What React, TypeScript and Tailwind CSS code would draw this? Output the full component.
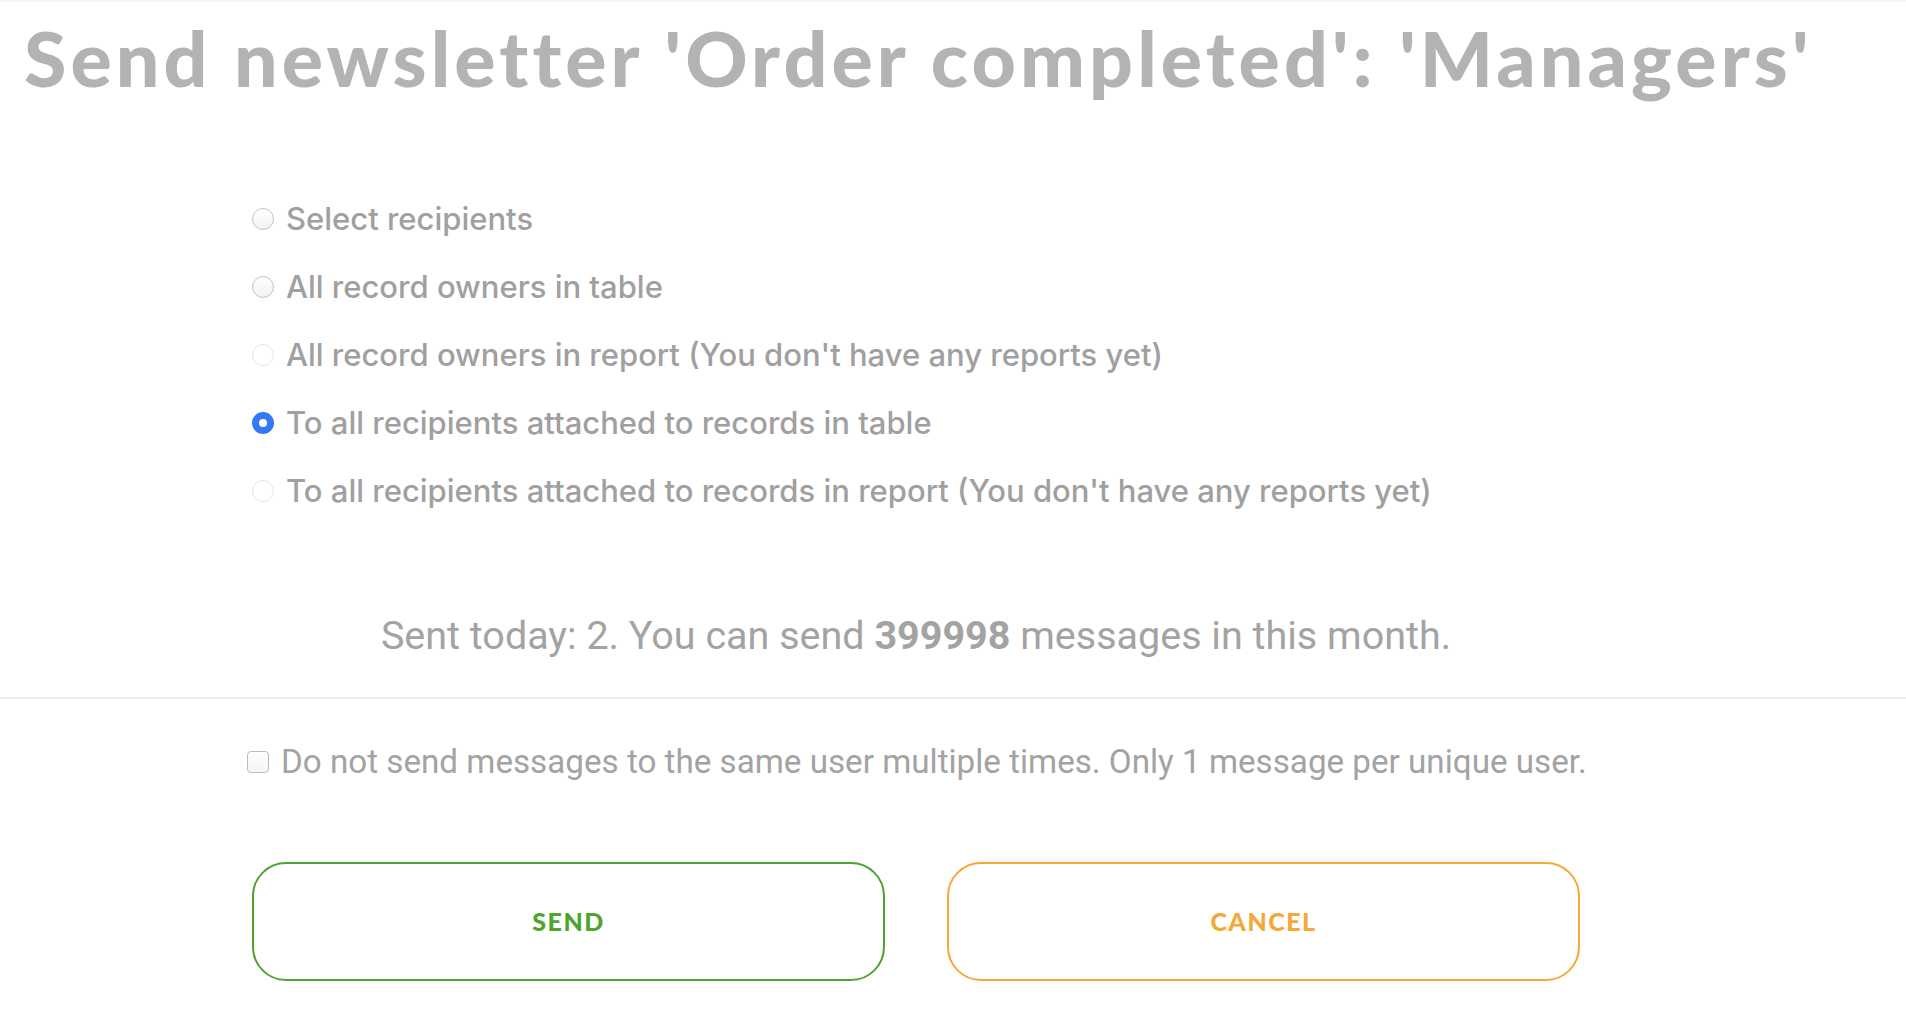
import { useState } from "react";

const options = [
  { label: "Select recipients", disabled: false },
  { label: "All record owners in table", disabled: false },
  { label: "All record owners in report (You don't have any reports yet)", disabled: true },
  { label: "To all recipients attached to records in table", disabled: false },
  { label: "To all recipients attached to records in report (You don't have any reports yet)", disabled: true },
];

const Radio = ({ checked, disabled }: { checked: boolean; disabled: boolean }) => {
  if (checked) {
    return (
      <span className="flex h-[22px] w-[22px] shrink-0 items-center justify-center rounded-full bg-[#3478f6]">
        <span className="h-[8px] w-[8px] rounded-full bg-white" />
      </span>
    );
  }
  return (
    <span
      className={
        disabled
          ? "h-[22px] w-[22px] shrink-0 rounded-full border border-[#e4e4e4] bg-white"
          : "h-[22px] w-[22px] shrink-0 rounded-full border border-[#c4c4c4] bg-gradient-to-b from-white to-[#f2f2f2]"
      }
    />
  );
};

const App = () => {
  const [selected, setSelected] = useState(3);
  const [unique, setUnique] = useState(false);

  return (
    <div className="min-h-screen border-t-2 border-[#f4f4f4] bg-white">
      <h1 className="whitespace-nowrap pl-[24px] pt-[17px] font-['Lato',sans-serif] text-[77px] font-black leading-none tracking-[4.1px] text-[#b3b3b3]">
        Send newsletter 'Order completed': 'Managers'
      </h1>

      <div className="pl-[252px] pr-[326px]">
        <div className="mt-[89px] flex flex-col">
          {options.map((opt, i) => (
            <label
              key={opt.label}
              className="flex h-[68px] cursor-pointer items-center gap-[12px] font-['Inter',sans-serif] text-[31px] font-medium text-[#a0a0a0]"
              onClick={() => !opt.disabled && setSelected(i)}
            >
              <Radio checked={selected === i} disabled={opt.disabled} />
              <span className="whitespace-nowrap">{opt.label}</span>
            </label>
          ))}
        </div>

        <p className="mt-[87px] text-center font-['Roboto',sans-serif] text-[39.5px] leading-[48px] text-[#a3a3a3]">
          Sent today: 2. You can send <span className="font-bold">399998</span> messages in this month.
        </p>
      </div>

      <div className="mt-[37px] border-b-2 border-[#ebebef]" />

      <div className="pl-[252px] pr-[326px]">
        <label
          className="-ml-[5px] mt-[39px] flex h-[48px] cursor-pointer items-center gap-[12px] font-['Roboto',sans-serif] text-[33.2px] text-[#a3a3a3]"
          onClick={() => setUnique(!unique)}
        >
          <span className="h-[22px] w-[22px] shrink-0 rounded-[4px] border border-[#bcbcbc] bg-gradient-to-b from-white to-[#f4f4f4]" />
          <span className="whitespace-nowrap">
            Do not send messages to the same user multiple times. Only 1 message per unique user.
          </span>
        </label>

        <div className="mt-[76px] grid grid-cols-2 gap-[62px]">
          <button className="flex h-[119px] items-center justify-center rounded-[34px] border-2 border-[#4ea42f] font-['Lato',sans-serif] text-[25px] font-black uppercase tracking-[1.5px] text-[#4ea42f]">
            Send
          </button>
          <button className="flex h-[119px] items-center justify-center rounded-[34px] border-2 border-[#f4a838] font-['Lato',sans-serif] text-[25px] font-black uppercase tracking-[1.5px] text-[#f4a838]">
            Cancel
          </button>
        </div>
      </div>
    </div>
  );
};

export default App;
